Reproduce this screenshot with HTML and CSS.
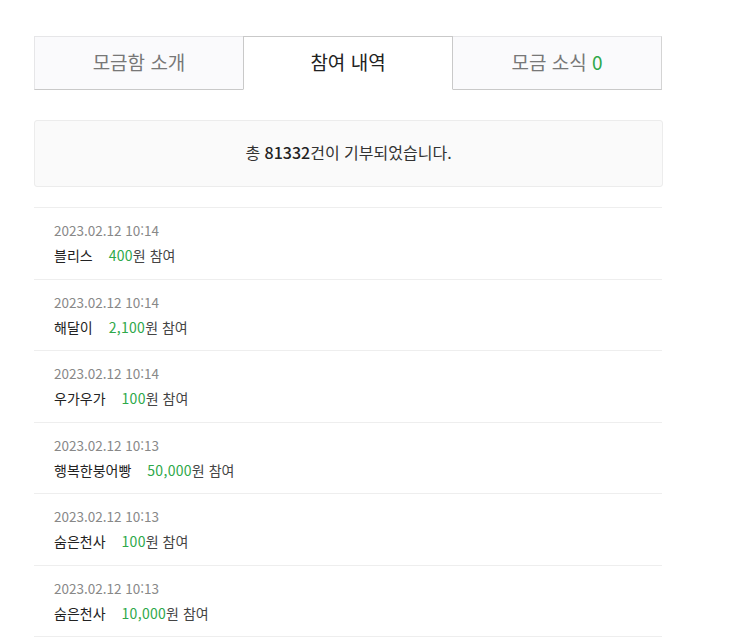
FILE: index.html
```html
<!DOCTYPE html>
<html lang="ko">
<head>
<meta charset="utf-8">
<link rel="stylesheet" href="styles.css">
</head>
<body>
<div class="wrap">
  <div class="tabs">
    <div class="tab"><span>모금함 소개</span></div>
    <div class="tab active"><span>참여 내역</span></div>
    <div class="tab"><span>모금 소식 <span class="green">0</span></span></div>
  </div>
  <div class="summary"><span>총 <strong>81332</strong>건이 기부되었습니다.</span></div>
  <ul class="list">
    <li class="row"><div class="date">2023.02.12 10:14</div><div class="line"><span class="name">블리스</span><span class="green">400</span>원 참여</div></li>
    <li class="row"><div class="date">2023.02.12 10:14</div><div class="line"><span class="name">해달이</span><span class="green">2,100</span>원 참여</div></li>
    <li class="row"><div class="date">2023.02.12 10:14</div><div class="line"><span class="name">우가우가</span><span class="green">100</span>원 참여</div></li>
    <li class="row"><div class="date">2023.02.12 10:13</div><div class="line"><span class="name">행복한붕어빵</span><span class="green">50,000</span>원 참여</div></li>
    <li class="row"><div class="date">2023.02.12 10:13</div><div class="line"><span class="name">숨은천사</span><span class="green">100</span>원 참여</div></li>
    <li class="row"><div class="date">2023.02.12 10:13</div><div class="line"><span class="name">숨은천사</span><span class="green">10,000</span>원 참여</div></li>
  </ul>
</div>
</body>
</html>
```
FILE: styles.css
```css
html, body {
  margin: 0;
  padding: 0;
  background: #fff;
}
body {
  font-family: "Noto Sans CJK KR", "Noto Sans", sans-serif;
  color: #222;
}
.wrap {
  width: 628px;
  padding: 36px 0 0 34px;
}
.tabs {
  display: flex;
}
.tab {
  flex: 1;
  height: 49px;
  padding-bottom: 3px;
  box-sizing: content-box;
  display: flex;
  align-items: center;
  justify-content: center;
  font-size: 19px;
  color: #777;
  background: #fafafc;
  border-top: 1px solid #e6e6e8;
  border-left: 1px solid #e6e6e8;
  border-bottom: 1px solid #c9c9c9;
}
.tab:last-child {
  border-right: 1px solid #d4d4d4;
}
.tab.active {
  background: #fff;
  color: #222;
  border-top: 1px solid #c9c9c9;
  border-left: 1px solid #c9c9c9;
  border-right: 1px solid #c9c9c9;
  border-bottom: 1px solid transparent;
}
.tab.active + .tab {
  border-left: none;
}
.green {
  color: #2ea84a;
}
.summary {
  margin-top: 30px;
  height: 62px;
  padding-bottom: 3px;
  width: 627px;
  display: flex;
  align-items: center;
  justify-content: center;
  background: #fafafa;
  border: 1px solid #ececec;
  border-radius: 3px;
  font-size: 16px;
  color: #333;
}
.summary strong {
  font-weight: 500;
  color: #222;
}
.list {
  list-style: none;
  margin: 20px 0 0;
  padding: 0;
}
.row {
  border-top: 1px solid #eeeeee;
  padding: 12px 20px 12.5px;
}
.row:last-child {
  border-bottom: 1px solid #eeeeee;
}
.date {
  font-size: 13.5px;
  line-height: 20px;
  color: #888;
}
.line {
  margin-top: 5px;
  padding-bottom: 1px;
  font-size: 14px;
  line-height: 20px;
  color: #444;
}
.line .green {
  letter-spacing: 0.3px;
}
.name {
  color: #222;
  margin-right: 16px;
}
```
